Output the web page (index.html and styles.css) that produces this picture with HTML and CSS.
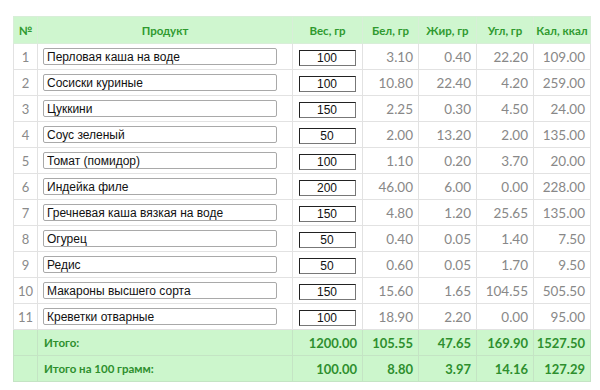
FILE: index.html
```html
<!DOCTYPE html>
<html lang="ru">
<head>
<meta charset="utf-8">
<title>Калькулятор</title>
<link rel="stylesheet" href="styles.css">
</head>
<body>
<table class="calc">
  <colgroup>
    <col class="c-num"><col class="c-prod"><col class="c-w"><col class="c-b"><col class="c-f"><col class="c-u"><col class="c-k">
  </colgroup>
  <thead>
    <tr><th>№</th><th>Продукт</th><th>Вес, гр</th><th>Бел, гр</th><th>Жир, гр</th><th>Угл, гр</th><th>Кал, ккал</th></tr>
  </thead>
  <tbody>
    <tr><td class="n">1</td><td class="p"><input class="prod" value="Перловая каша на воде"></td><td class="w"><input class="wt" value="100"></td><td class="v">3.10</td><td class="v">0.40</td><td class="v">22.20</td><td class="v">109.00</td></tr>
    <tr><td class="n">2</td><td class="p"><input class="prod" value="Сосиски куриные"></td><td class="w"><input class="wt" value="100"></td><td class="v">10.80</td><td class="v">22.40</td><td class="v">4.20</td><td class="v">259.00</td></tr>
    <tr><td class="n">3</td><td class="p"><input class="prod" value="Цуккини"></td><td class="w"><input class="wt" value="150"></td><td class="v">2.25</td><td class="v">0.30</td><td class="v">4.50</td><td class="v">24.00</td></tr>
    <tr><td class="n">4</td><td class="p"><input class="prod" value="Соус зеленый"></td><td class="w"><input class="wt" value="50"></td><td class="v">2.00</td><td class="v">13.20</td><td class="v">2.00</td><td class="v">135.00</td></tr>
    <tr><td class="n">5</td><td class="p"><input class="prod" value="Томат (помидор)"></td><td class="w"><input class="wt" value="100"></td><td class="v">1.10</td><td class="v">0.20</td><td class="v">3.70</td><td class="v">20.00</td></tr>
    <tr><td class="n">6</td><td class="p"><input class="prod" value="Индейка филе"></td><td class="w"><input class="wt" value="200"></td><td class="v">46.00</td><td class="v">6.00</td><td class="v">0.00</td><td class="v">228.00</td></tr>
    <tr><td class="n">7</td><td class="p"><input class="prod" value="Гречневая каша вязкая на воде"></td><td class="w"><input class="wt" value="150"></td><td class="v">4.80</td><td class="v">1.20</td><td class="v">25.65</td><td class="v">135.00</td></tr>
    <tr><td class="n">8</td><td class="p"><input class="prod" value="Огурец"></td><td class="w"><input class="wt" value="50"></td><td class="v">0.40</td><td class="v">0.05</td><td class="v">1.40</td><td class="v">7.50</td></tr>
    <tr><td class="n">9</td><td class="p"><input class="prod" value="Редис"></td><td class="w"><input class="wt" value="50"></td><td class="v">0.60</td><td class="v">0.05</td><td class="v">1.70</td><td class="v">9.50</td></tr>
    <tr><td class="n">10</td><td class="p"><input class="prod" value="Макароны высшего сорта"></td><td class="w"><input class="wt" value="150"></td><td class="v">15.60</td><td class="v">1.65</td><td class="v">104.55</td><td class="v">505.50</td></tr>
    <tr><td class="n">11</td><td class="p"><input class="prod" value="Креветки отварные"></td><td class="w"><input class="wt" value="100"></td><td class="v">18.90</td><td class="v">2.20</td><td class="v">0.00</td><td class="v">95.00</td></tr>
  </tbody>
  <tfoot>
    <tr><td></td><td class="lbl">Итого:</td><td class="t">1200.00</td><td class="t">105.55</td><td class="t">47.65</td><td class="t">169.90</td><td class="t">1527.50</td></tr>
    <tr><td></td><td class="lbl">Итого на 100 грамм:</td><td class="t">100.00</td><td class="t">8.80</td><td class="t">3.97</td><td class="t">14.16</td><td class="t">127.29</td></tr>
  </tfoot>
</table>
</body>
</html>
```
FILE: styles.css
```css
html, body {
  margin: 0;
  background: #ffffff;
}
body {
  padding: 16px 10px 0 13px;
  font-family: Lato, "Open Sans", sans-serif;
}
.calc {
  border-collapse: collapse;
  table-layout: fixed;
  width: 577px;
}
.c-num { width: 24px; }
.c-prod { width: 255px; }
.c-w { width: 70px; }
.c-b { width: 56px; }
.c-f { width: 58px; }
.c-u { width: 57px; }
.c-k { width: 57px; }

.calc th, .calc td {
  border: 1px solid #e2e2e2;
  padding: 0;
}
.calc th {
  height: 26px;
  background: #cff6cf;
  color: #2f9a2f;
  font-weight: 700;
  font-size: 11.5px;
  text-align: center;
  border-color: #d8eed8;
}
.calc tbody td {
  height: 25px;
}
.n {
  text-align: center;
  color: #8a8a8a;
  font-size: 13px;
  font-weight: 400;
}
.p {
  padding: 0 0 0 5px !important;
}
.prod {
  display: block;
  box-sizing: border-box;
  width: 234px;
  height: 17px;
  margin: 0;
  padding: 0 3px;
  border: 1px solid #a9a9a9;
  border-radius: 2px;
  font-family: "Liberation Sans", Arial, sans-serif;
  font-size: 12px;
  color: #111;
  background: #fff;
}
.w {
  text-align: center;
}
.wt {
  box-sizing: border-box;
  width: 57px;
  height: 16px;
  margin: 0 0 0 -1px;
  padding: 0;
  border: 1px solid #555;
  border-top-color: #222;
  border-left-color: #222;
  border-right-color: #777;
  border-bottom-color: #777;
  font-family: "Liberation Sans", Arial, sans-serif;
  font-size: 12px;
  color: #111;
  text-align: center;
  vertical-align: middle;
  background: #fff;
}
.v {
  text-align: right;
  padding-right: 5px !important;
  color: #888;
  font-size: 13.5px;
  font-weight: 400;
}
.calc tfoot td {
  height: 25px;
  background: #ccf6cc;
  border-color: #c4e4c4;
  color: #2e8f2e;
  font-weight: 700;
}
.lbl {
  padding-left: 6px !important;
  font-size: 11.5px;
}
.t {
  text-align: right;
  padding-right: 5px !important;
  font-size: 13px;
}
```
